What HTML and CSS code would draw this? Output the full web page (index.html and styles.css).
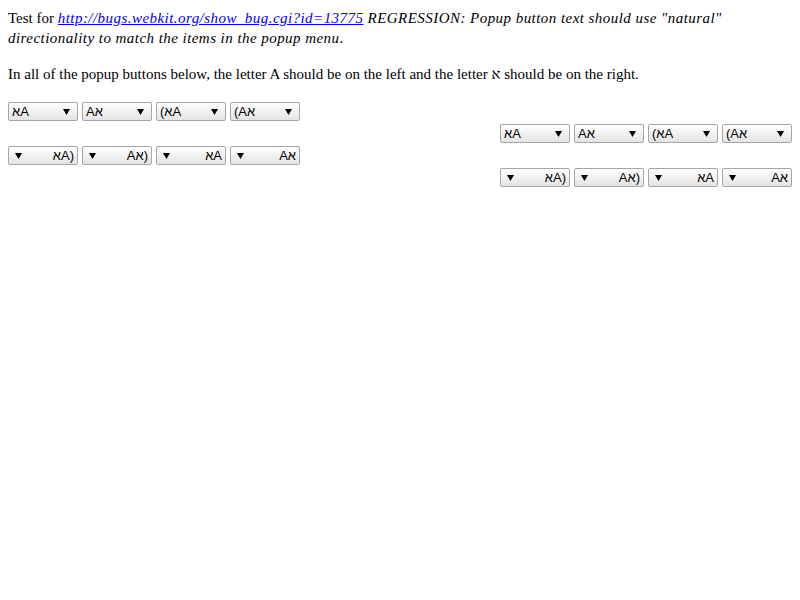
FILE: index.html
```html
<!DOCTYPE html>
<html>
<head>
<meta charset="utf-8">
<link rel="stylesheet" href="styles.css">
</head>
<body>
<p class="intro">Test for <i><a href="#">http://bugs.webkit.org/show_bug.cgi?id=13775</a> REGRESSION: Popup button text should use "natural" directionality to match the items in the popup menu</i>.</p>
<p>In all of the popup buttons below, the letter A should be on the left and the letter <span>&#x05d0;</span> should be on the right.</p>

<div class="row">
  <span class="sel"><bdo dir="ltr" class="txt">&#x05d0;A</bdo><svg class="arr" viewBox="0 0 7 6"><path d="M0 0H7L3.5 6Z"/></svg></span>
  <span class="sel"><bdo dir="ltr" class="txt">A&#x05d0;</bdo><svg class="arr" viewBox="0 0 7 6"><path d="M0 0H7L3.5 6Z"/></svg></span>
  <span class="sel"><bdo dir="ltr" class="txt">(&#x05d0;A</bdo><svg class="arr" viewBox="0 0 7 6"><path d="M0 0H7L3.5 6Z"/></svg></span>
  <span class="sel"><bdo dir="ltr" class="txt">(A&#x05d0;</bdo><svg class="arr" viewBox="0 0 7 6"><path d="M0 0H7L3.5 6Z"/></svg></span>
</div>
<div class="row right">
  <span class="sel"><bdo dir="ltr" class="txt">&#x05d0;A</bdo><svg class="arr" viewBox="0 0 7 6"><path d="M0 0H7L3.5 6Z"/></svg></span>
  <span class="sel"><bdo dir="ltr" class="txt">A&#x05d0;</bdo><svg class="arr" viewBox="0 0 7 6"><path d="M0 0H7L3.5 6Z"/></svg></span>
  <span class="sel"><bdo dir="ltr" class="txt">(&#x05d0;A</bdo><svg class="arr" viewBox="0 0 7 6"><path d="M0 0H7L3.5 6Z"/></svg></span>
  <span class="sel"><bdo dir="ltr" class="txt">(A&#x05d0;</bdo><svg class="arr" viewBox="0 0 7 6"><path d="M0 0H7L3.5 6Z"/></svg></span>
</div>
<div class="row">
  <span class="sel rtl"><svg class="arr" viewBox="0 0 7 6"><path d="M0 0H7L3.5 6Z"/></svg><bdo dir="ltr" class="txt">&#x05d0;A)</bdo></span>
  <span class="sel rtl"><svg class="arr" viewBox="0 0 7 6"><path d="M0 0H7L3.5 6Z"/></svg><bdo dir="ltr" class="txt">A&#x05d0;)</bdo></span>
  <span class="sel rtl"><svg class="arr" viewBox="0 0 7 6"><path d="M0 0H7L3.5 6Z"/></svg><bdo dir="ltr" class="txt">&#x05d0;A</bdo></span>
  <span class="sel rtl"><svg class="arr" viewBox="0 0 7 6"><path d="M0 0H7L3.5 6Z"/></svg><bdo dir="ltr" class="txt">A&#x05d0;</bdo></span>
</div>
<div class="row right">
  <span class="sel rtl"><svg class="arr" viewBox="0 0 7 6"><path d="M0 0H7L3.5 6Z"/></svg><bdo dir="ltr" class="txt">&#x05d0;A)</bdo></span>
  <span class="sel rtl"><svg class="arr" viewBox="0 0 7 6"><path d="M0 0H7L3.5 6Z"/></svg><bdo dir="ltr" class="txt">A&#x05d0;)</bdo></span>
  <span class="sel rtl"><svg class="arr" viewBox="0 0 7 6"><path d="M0 0H7L3.5 6Z"/></svg><bdo dir="ltr" class="txt">&#x05d0;A</bdo></span>
  <span class="sel rtl"><svg class="arr" viewBox="0 0 7 6"><path d="M0 0H7L3.5 6Z"/></svg><bdo dir="ltr" class="txt">A&#x05d0;</bdo></span>
</div>
</body>
</html>
```
FILE: styles.css
```css
body {
  margin: 8px;
  font-family: "Liberation Serif", "DejaVu Serif", serif;
  font-size: 15px;
  line-height: 20px;
  color: #000;
  background: #fff;
}
p {
  margin: 0 0 16px 0;
}
i {
  letter-spacing: 0.45px;
}
a {
  color: #0000ee;
  text-decoration: underline;
}
.row {
  display: flex;
  gap: 4px;
  height: 22px;
  padding-top: 2px;
  box-sizing: border-box;
}
.row.right {
  justify-content: flex-end;
}
.sel {
  box-sizing: border-box;
  width: 70px;
  height: 19px;
  display: flex;
  align-items: center;
  justify-content: space-between;
  padding: 0 7px 0 3px;
  border: 1px solid #a6a6a6;
  border-radius: 2px;
  background: linear-gradient(#ffffff, #e4e4e4);
  font-family: "Liberation Sans", "DejaVu Sans", sans-serif;
  font-size: 13px;
  line-height: 15px;
  color: #000;
}
.sel.rtl {
  padding: 0 3px 0 6px;
}
.arr {
  width: 7px;
  height: 6px;
  fill: #000;
}
```
